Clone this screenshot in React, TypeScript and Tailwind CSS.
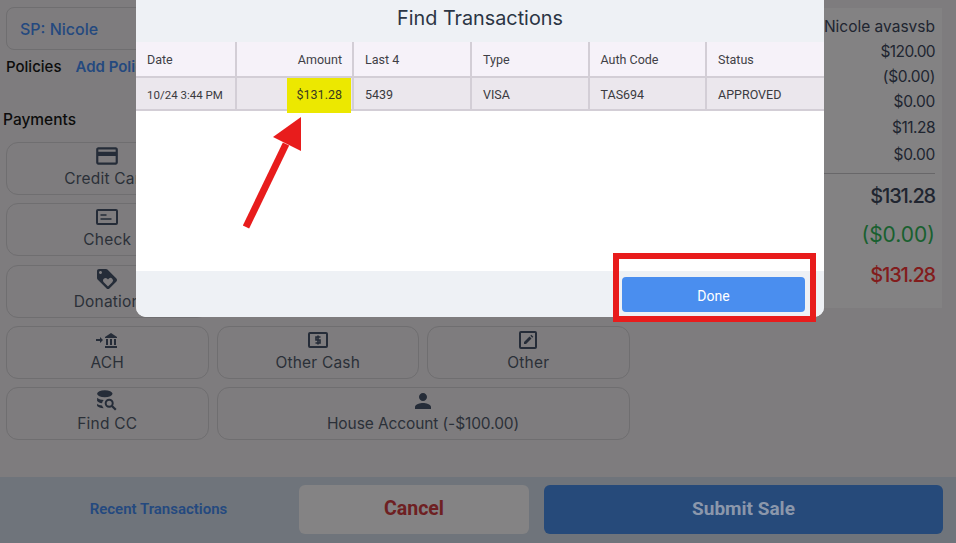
import React from 'react';
import { MdCreditCard, MdLoyalty, MdPerson } from 'react-icons/md';

const poppins = 'font-["Inter","Noto_Sans",sans-serif]';
const roboto = 'font-["Roboto",sans-serif]';

const CheckIcon = () => (
    <svg width="24" height="24" viewBox="0 0 24 24" className="text-[#252c38]">
        <rect x="2" y="5" width="20" height="14" rx="1" fill="none" stroke="currentColor" strokeWidth="2" />
        <path d="M5.5 10h6M5.5 14h11" stroke="currentColor" strokeWidth="1.6" />
    </svg>
);

const BankIcon = () => (
    <svg width="22" height="16" viewBox="0 0 22 16" className="text-[#252c38]">
        <path d="M0 7h4V5l3 3-3 3V9H0zM9 5l6-4 6 4v1H9zM10 7h2v6h-2zM14 7h2v6h-2zM18 7h2v6h-2zM9 14h12v2H9z" fill="currentColor" />
    </svg>
);

const CashIcon = () => (
    <svg width="20" height="16" viewBox="0 0 20 16" className="text-[#252c38]">
        <rect x="1" y="1" width="18" height="14" rx="1" fill="none" stroke="currentColor" strokeWidth="2" />
        <path d="M12.5 5H8v3h4v3H7.5M10 3.500v9" fill="none" stroke="currentColor" strokeWidth="1.6" />
    </svg>
);

const EditIcon = () => (
    <svg width="18" height="18" viewBox="0 0 18 18" className="text-[#252c38]">
        <rect x="1" y="1" width="16" height="16" rx="1" fill="none" stroke="currentColor" strokeWidth="2" />
        <path d="M5 13v-2l5.5-5.5 2 2L7 13zM11.3 4.7l1-1 2 2-1 1z" fill="currentColor" />
    </svg>
);

const FindIcon = () => (
    <svg width="22" height="22" viewBox="0 0 20 20" className="text-[#252c38]">
        <ellipse cx="8" cy="3.5" rx="7" ry="3.2" fill="currentColor" />
        <path d="M1 7c1.5 1.5 4 2 6 2-1 1-1.500 2-1.500 3C3.500 12 2 11 1 10zM1 12.500c1 1 2.500 1.500 4.500 1.500.3 1 1 1.800 1.500 2.500-3 0-5-1-6-2z" fill="currentColor" />
        <circle cx="12" cy="12" r="3.200" fill="none" stroke="currentColor" strokeWidth="1.800" />
        <path d="M14.500 14.500l3.500 3.500" stroke="currentColor" strokeWidth="2" />
    </svg>
);

const PayButton: React.FC<{ label: string; icon: React.ReactNode; wide?: boolean }> = ({ label, icon, wide }) => (
    <div className={`${wide ? 'col-span-2 tracking-[-0.1px]' : 'tracking-[0.2px]'} h-[53px] rounded-xl border border-[#6f6e70] flex flex-col items-center justify-end pb-[4px] text-[#2b3038]`}>
        <div className="h-[24px] flex items-center justify-center">{icon}</div>
        <span className="text-[15.500px] leading-[22px]">{label}</span>
    </div>
);

const columns = ['w-[101px]', 'w-[117px]', 'w-[118px]', 'w-[117.500px]', 'w-[117.500px]', 'flex-1'];

export default function App() {
    const headers = ['Date', 'Amount', 'Last 4', 'Type', 'Auth Code', 'Status'];
    const cells = ['10/24 3:44 PM', '', '5439', 'VISA', 'TAS694', 'APPROVED'];

    return (
        <div className={`relative w-[956px] h-[543px] overflow-hidden bg-[#7e7c7e] flex flex-col ${poppins}`}>
            <div className="flex-1 flex min-h-0">
                {/* Left: customer + payments */}
                <div className="w-[824px] pl-[6px] pt-[7px]">
                    <div className="w-[300px] h-[43px] rounded-lg border border-[#6f6e70] flex items-center pl-[13px] text-[16px] font-medium text-[#24497f]">SP: Nicole</div>
                    <div className="flex items-center gap-[14px] mt-[6px] h-[22px] w-[130px] overflow-hidden whitespace-nowrap">
                        <span className="text-[15px] font-medium text-[#0c0c0c]">Policies</span>
                        <span className="text-[15px] font-semibold text-[#24497f]">Add Policy</span>
                    </div>
                    <div className="mt-[31px] -ml-[3px] text-[15.500px] leading-[22px] font-medium text-[#0c0c0c]">Payments</div>
                    <div className="mt-[11px] grid grid-cols-[202.500px_202.500px_202.500px] gap-x-[8px] gap-y-[8.250px]">
                        <PayButton label="Credit Card" icon={<MdCreditCard size={26} className="text-[#252c38]" />} />
                        <div className="col-span-2" />
                        <PayButton label="Check" icon={<CheckIcon />} />
                        <div className="col-span-2" />
                        <PayButton label="Donation" icon={<MdLoyalty size={24} className="text-[#252c38]" />} />
                        <div className="col-span-2" />
                        <PayButton label="ACH" icon={<BankIcon />} />
                        <PayButton label="Other Cash" icon={<CashIcon />} />
                        <PayButton label="Other" icon={<EditIcon />} />
                        <PayButton label="Find CC" icon={<FindIcon />} />
                        <PayButton label="House Account (-$100.00)" icon={<MdPerson size={24} className="text-[#252c38]" />} wide />
                    </div>
                </div>

                {/* Right: totals */}
                <div className="w-[118px] h-[300px] mt-[8px] bg-[#838283] flex flex-col items-end text-[#202530] pr-[7px]">
                    <span className="text-[15.500px] leading-[24px] mt-[7px] whitespace-nowrap">Nicole avasvsb</span>
                    <span className="text-[15.500px] leading-[25px] tracking-[-0.6px]">$120.00</span>
                    <span className="text-[15.500px] leading-[25px] tracking-[-0.3px]">($0.00)</span>
                    <span className="text-[15.500px] leading-[25px] tracking-[-0.3px]">$0.00</span>
                    <span className="text-[15.500px] leading-[28px] tracking-[-0.5px]">$11.28</span>
                    <span className="text-[15.500px] leading-[25px] tracking-[-0.3px]">$0.00</span>
                    <div className="w-full border-t border-[#686769] mt-[6px]" />
                    <span className="text-[20px] leading-[28px] mt-[8px] font-medium tracking-[-1.200px]">$131.28</span>
                    <span className="text-[21px] leading-[30px] mt-[10px] text-[#18602f]">($0.00)</span>
                    <span className="text-[20px] leading-[28px] mt-[11px] font-medium tracking-[-1.200px] text-[#821c1c]">$131.28</span>
                </div>
            </div>

            {/* Bottom bar */}
            <div className="h-[66px] shrink-0 bg-[#6f747b] flex items-center pb-[2px] pl-[18px] pr-[13px]">
                <div className={`w-[281px] text-center text-[15px] font-semibold text-[#24497f] ${roboto}`}>Recent Transactions</div>
                <div className={`w-[230px] h-[49px] rounded-md bg-[#848384] flex items-center justify-center text-[19.500px] font-bold text-[#6e2022] ${roboto}`}>Cancel</div>
                <div className={`flex-1 h-[49px] ml-[15px] rounded-md bg-[#264a7a] flex items-center justify-center text-[19px] font-bold text-[#8b97ab] ${roboto}`}>Submit Sale</div>
            </div>

            {/* Find Transactions dialog */}
            <div className="absolute left-[136px] top-0 w-[688px] h-[317px] rounded-b-[10px] overflow-hidden bg-white flex flex-col">
                <div className="h-[42px] shrink-0 bg-[#eef1f5] flex items-center justify-center pb-[5px] text-[19.800px] text-[#2b3544]">Find Transactions</div>
                <div className={`h-[36px] shrink-0 flex bg-[#f6f2f9] border-b-2 border-[#d3ced6] text-[12.500px] text-[#3f3f46] ${roboto}`}>
                    {headers.map((h, i) => (
                        <div key={h} className={`${columns[i]} flex items-center pl-[11px] pr-[10px] pt-[2px] ${i < 5 ? 'border-r-2 border-[#d3ced6]' : ''} ${i === 1 ? 'justify-end' : ''}`}>{h}</div>
                    ))}
                </div>
                <div className={`h-[33px] shrink-0 flex bg-[#ebe7ed] border-b-2 border-[#d3ced6] text-[12.500px] text-[#3a3a40] ${roboto}`}>
                    {cells.map((c, i) => (
                        <div key={i} className={`${columns[i]} relative flex items-center pl-[11px] pr-[10px] pt-[4px] ${i < 5 ? 'border-r-2 border-[#d3ced6]' : ''} ${i === 0 ? 'text-[11.500px]' : ''}`}>
                            {c}
                            {/* yellow highlight marked on the amount */}
                            {i === 1 && (
                                <div className="absolute right-[1px] top-0 w-[64px] h-[35px] bg-[#ece800] flex items-center justify-end pr-[9px] text-[#3a3a20]">$131.28</div>
                            )}
                        </div>
                    ))}
                </div>
                <div className="flex-1" />
                <div className={`h-[46px] shrink-0 bg-[#eef1f5] flex justify-end pt-[6px] pr-[19px] ${roboto}`}>
                    <div className="w-[183px] h-[35px] rounded-[4px] bg-[#4a8eef] flex items-center justify-center pt-[3px] text-[14px] text-white">Done</div>
                </div>
            </div>

            {/* Annotations drawn over the screenshot */}
            <div className="absolute left-[613px] top-[253px] w-[203px] h-[69px] border-[6px] border-[#e81c1c]" />
            <svg className="absolute left-[240px] top-[112px]" width="70" height="120" viewBox="0 0 70 120">
                <path d="M6 115L46 32" stroke="#e81c1c" strokeWidth="7" fill="none" />
                <path d="M61 5V39L33 25z" fill="#e81c1c" />
            </svg>
        </div>
    );
}
